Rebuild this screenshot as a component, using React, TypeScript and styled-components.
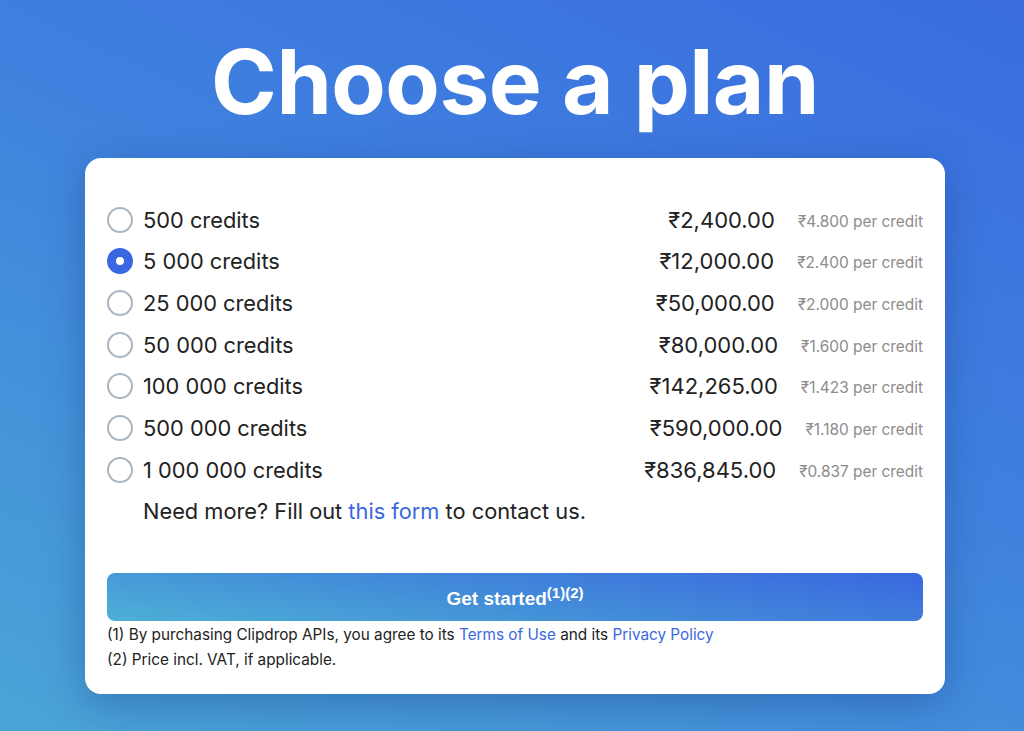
import React, { useState } from "react";
import styled, { createGlobalStyle } from "styled-components";

const Global = createGlobalStyle`
  html, body { margin: 0; padding: 0; }
  body {
    font-family: Inter, "Noto Sans", "Liberation Sans", sans-serif;
    -webkit-font-smoothing: antialiased;
  }
  * { box-sizing: border-box; }
`;

const Page = styled.div`
  width: 1024px;
  height: 731px;
  overflow: hidden;
  background: linear-gradient(205deg, #3a6ce0 0%, #3f82de 45%, #4aa5d6 100%);
  display: flex;
  flex-direction: column;
  align-items: center;
  padding-left: 6px;
`;

const Title = styled.h1`
  margin: 0;
  padding-top: 32px;
  height: 158px;
  font-family: Inter, "Liberation Sans", sans-serif;
  font-weight: 700;
  font-size: 89px;
  line-height: 100px;
  letter-spacing: -0.5px;
  color: #fff;
  text-align: center;
`;

const Card = styled.div`
  width: 860px;
  height: 536px;
  background: #fff;
  border-radius: 16px;
  box-shadow: 0 10px 40px rgba(20, 50, 120, 0.35);
  padding: 41px 22px 20px 22px;
  display: flex;
  flex-direction: column;
`;

const List = styled.div`
  display: flex;
  flex-direction: column;
  flex-shrink: 0;
`;

const Row = styled.label`
  height: 41.67px;
  display: flex;
  align-items: center;
  justify-content: space-between;
  cursor: pointer;
`;

const Left = styled.div`
  display: flex;
  align-items: center;
  gap: 10px;
`;

const Radio = styled.span<{ $checked: boolean }>`
  width: 26px;
  height: 26px;
  border-radius: 50%;
  flex-shrink: 0;
  border: ${(p) => (p.$checked ? "9px solid #3b66e2" : "2.5px solid #aab5c0")};
  background: #fff;
`;

const Label = styled.span`
  font-size: 21.8px;
  color: #222;
`;

const Right = styled.div`
  display: flex;
  align-items: center;
  gap: 23px;
`;

const Price = styled.span`
  font-size: 22px;
  color: #222;
`;

const PerCredit = styled.span`
  font-size: 15.4px;
  color: #8c8c8c;
  padding-top: 3px;
`;

const More = styled.p`
  margin: 0;
  height: 41.67px;
  display: flex;
  align-items: center;
  padding-left: 36px;
  font-size: 21.8px;
  color: #222;
  white-space: pre;
`;

const Link = styled.a`
  color: #3b68e0;
  text-decoration: none;
`;

const Button = styled.button`
  margin-top: 41px;
  height: 48px;
  flex-shrink: 0;
  width: 100%;
  border: none;
  border-radius: 8px;
  background: linear-gradient(188deg, #3a67e0 0%, #438ed8 55%, #4db0d6 100%);
  color: #fff;
  font-family: "Liberation Sans", Arial, sans-serif;
  font-weight: 700;
  font-size: 19px;
  cursor: pointer;
  sup {
    font-size: 15px;
  }
`;

const Notes = styled.div`
  padding-top: 1px;
  display: flex;
  flex-direction: column;
`;

const Note = styled.p`
  margin: 0;
  font-size: 15.3px;
  line-height: 25px;
  color: #222;
`;

const plans = [
  { credits: "500 credits", price: "₹2,400.00", per: "₹4.800 per credit" },
  { credits: "5 000 credits", price: "₹12,000.00", per: "₹2.400 per credit" },
  { credits: "25 000 credits", price: "₹50,000.00", per: "₹2.000 per credit" },
  { credits: "50 000 credits", price: "₹80,000.00", per: "₹1.600 per credit" },
  { credits: "100 000 credits", price: "₹142,265.00", per: "₹1.423 per credit" },
  { credits: "500 000 credits", price: "₹590,000.00", per: "₹1.180 per credit" },
  { credits: "1 000 000 credits", price: "₹836,845.00", per: "₹0.837 per credit" },
];

export default function App() {
  const [sel, setSel] = useState(1);
  return (
    <>
      <Global />
      <Page>
        <Title>Choose a plan</Title>
        <Card>
          <List>
            {plans.map((p, i) => (
              <Row key={p.credits} onClick={() => setSel(i)}>
                <Left>
                  <Radio $checked={sel === i} />
                  <Label>{p.credits}</Label>
                </Left>
                <Right>
                  <Price>{p.price}</Price>
                  <PerCredit>{p.per}</PerCredit>
                </Right>
              </Row>
            ))}
            <More>
              Need more? Fill out <Link href="#">this form</Link> to contact us.
            </More>
          </List>
          <Button>
            Get started<sup>(1)(2)</sup>
          </Button>
          <Notes>
            <Note>
              (1) By purchasing Clipdrop APIs, you agree to its <Link href="#">Terms of Use</Link> and its{" "}
              <Link href="#">Privacy Policy</Link>
            </Note>
            <Note>(2) Price incl. VAT, if applicable.</Note>
          </Notes>
        </Card>
      </Page>
    </>
  );
}
